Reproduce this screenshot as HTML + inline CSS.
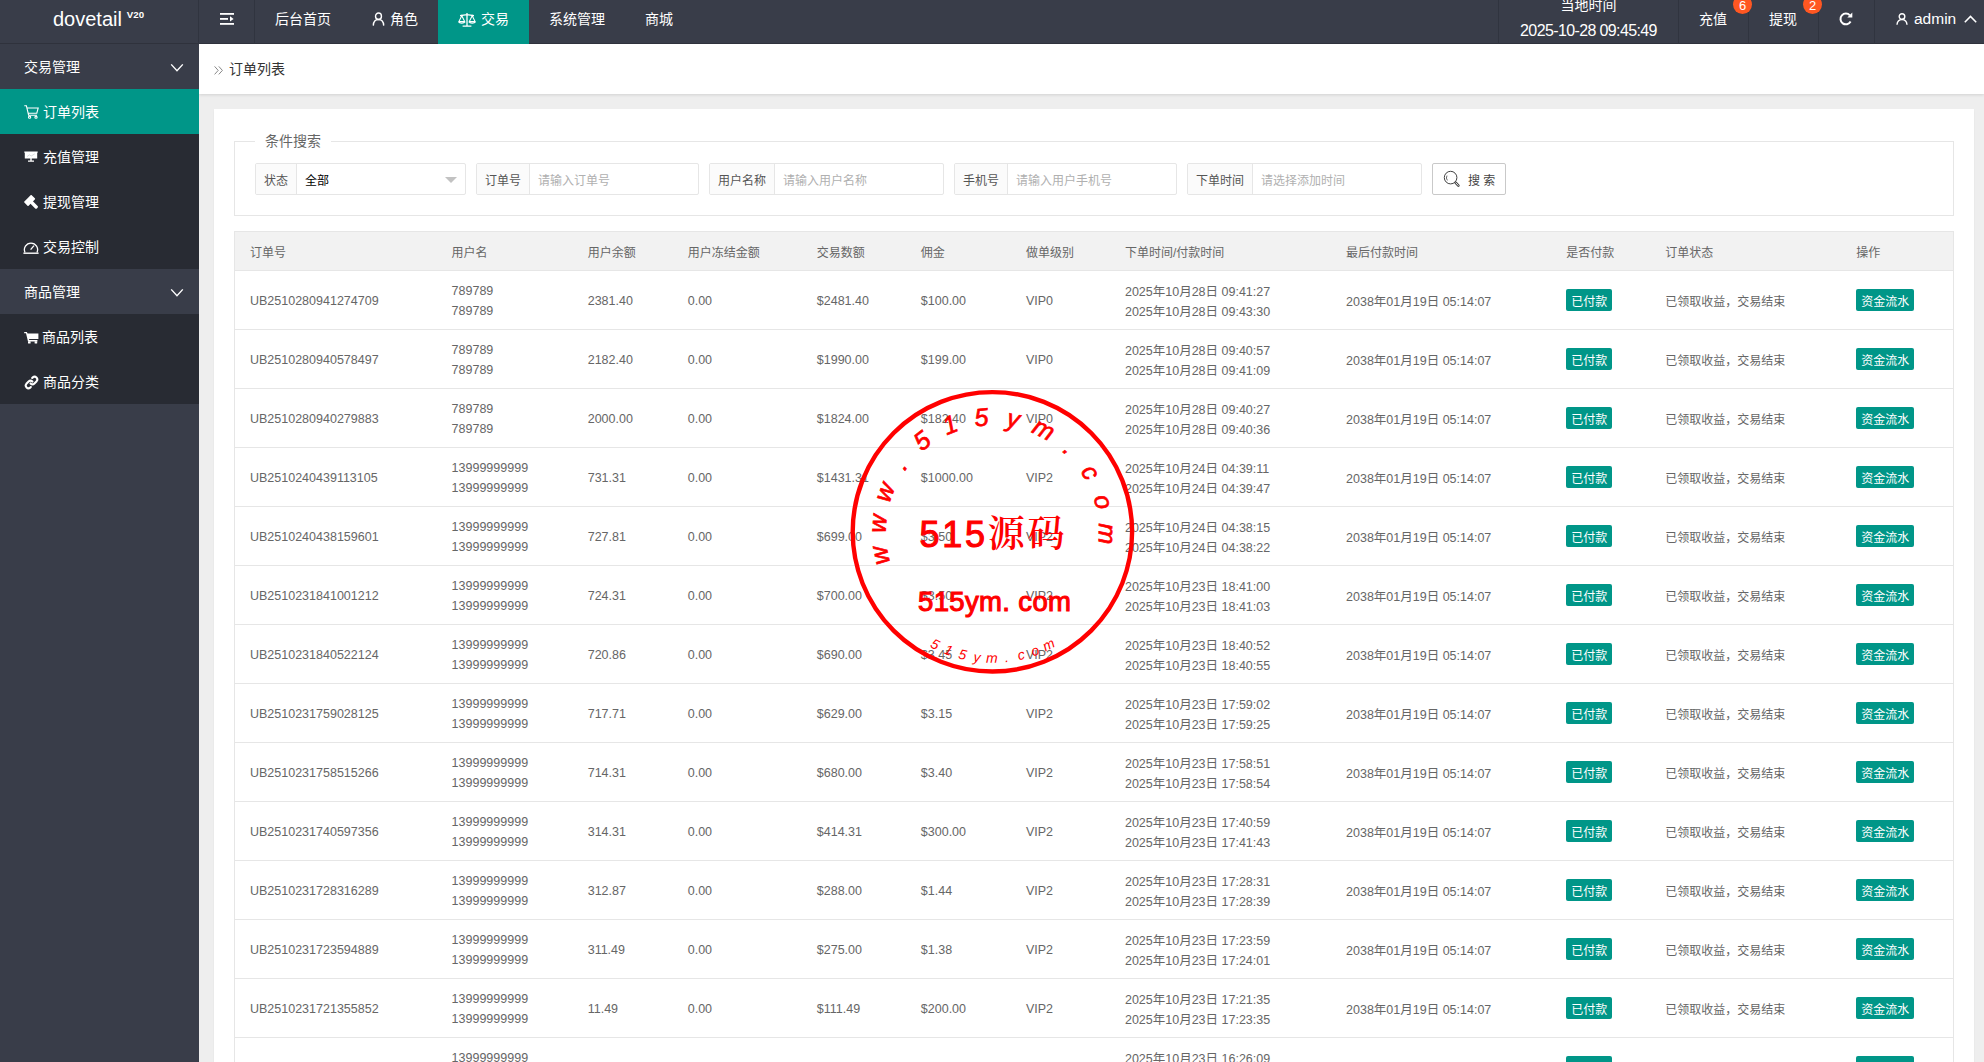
<!DOCTYPE html>
<html lang="zh-CN">
<head>
<meta charset="utf-8">
<title>订单列表</title>
<style>
*{box-sizing:border-box;margin:0;padding:0}
html,body{width:1984px;height:1062px;overflow:hidden;background:#eeeeee;
  font-family:"Liberation Sans","Noto Sans CJK SC",sans-serif;font-size:14px;color:#333}
a{color:inherit;text-decoration:none}
ul{list-style:none}
svg{display:block}

/* ---------- header ---------- */
#hd{position:absolute;left:0;top:0;width:1984px;height:44px;background:#393d49;color:#fff;z-index:5;box-shadow:inset 0 -1px 0 #2f323c}
#logo{position:absolute;left:0;top:0;width:199px;height:44px;border-right:1px solid #30343f}
#logo b{position:absolute;left:53px;top:6px;font-weight:400;font-size:20px;line-height:26px}
#logo i{position:absolute;left:126.8px;top:8.5px;font-style:normal;font-weight:700;font-size:9.7px;line-height:12px}
#nav{position:absolute;left:199px;top:0;height:44px;display:flex}
#nav li{position:relative;height:44px;line-height:39px;padding:0 20px;font-size:14px;white-space:nowrap;display:flex;align-items:flex-start}
#nav li.ham{width:56px;padding:0;border-right:1px solid #30343f}
#nav li.on{background:#009688}
#nav li svg{margin-right:6px}
#rt{position:absolute;right:0;top:0;height:44px;display:flex}
#rt li{position:relative;height:44px;line-height:39px;font-size:14px;border-left:1px solid #30343f;white-space:nowrap}
.bdg{position:absolute;z-index:3;top:-5px;width:19px;height:19px;border-radius:50%;background:#ff5722;color:#fff;font-size:13px;line-height:21px;text-align:center}

#rt li.tm{text-align:center}
#rt .t1{position:absolute;left:0;width:100%;top:-6px;line-height:22px;font-size:14px}
#rt .t2{position:absolute;left:0;width:100%;top:19.5px;line-height:22px;font-size:16px;letter-spacing:-.62px}
#rt .adm{position:absolute;left:39px;top:0;font-size:15.5px;line-height:38px}
/* ---------- sidebar ---------- */
#sd{position:absolute;left:0;top:44px;width:199px;height:1018px;background:#393d49;color:#fff;z-index:4}
#sd li{position:relative;height:45px;line-height:47px;font-size:14px;white-space:nowrap}
#sd li.g{padding-left:24px}
#sd li.c{background:#282b33;padding-left:43px}
#sd li.c.on{background:#009688}
#sd li svg{position:absolute}

/* ---------- breadcrumb ---------- */
#bc{position:absolute;left:199px;top:44px;width:1785px;height:50px;background:#fff;box-shadow:0 1px 3px rgba(0,0,0,.12);z-index:3}
#bc span{position:absolute;left:30px;top:0;line-height:51px;font-size:14px;color:#333}

/* ---------- card ---------- */
#card{position:absolute;left:214px;top:109px;width:1760px;height:960px;background:#fff;box-shadow:0 1px 2px rgba(0,0,0,.05)}
#fs{position:absolute;left:20px;top:32px;width:1720px;height:75px;border:1px solid #e6e6e6}
#fs .lg{position:absolute;left:20px;top:-12px;padding:0 10px;background:#fff;font-size:14px;line-height:22px;color:#666}
.ig{position:absolute;top:21px;height:32px;border:1px solid #e6e6e6;border-radius:2px;background:#fff;display:flex;font-size:12px;line-height:34px;overflow:hidden}
.ig .lb{background:#fbfbfb;border-right:1px solid #e6e6e6;padding:0 8px;color:#555;white-space:nowrap}
.ig .ph{padding-left:8px;color:#b0b0b0;white-space:nowrap}
.ig .vl{padding-left:8px;color:#000;white-space:nowrap}
.ig .tri{position:absolute;right:8.5px;top:12.5px;width:0;height:0;border:6px solid transparent;border-top-color:#c2c2c2;border-bottom:0}
#sbtn{position:absolute;left:1197px;top:21px;width:74px;height:32px;border:1px solid #c9c9c9;border-radius:2px;background:#fff;font-size:12px;line-height:34px;color:#444}

/* ---------- table ---------- */
#tb{position:absolute;left:20px;top:122px;width:1720px;border-collapse:collapse;table-layout:fixed;font-size:12.5px;color:#666}
#tb th,#tb td{border-top:1px solid #e6e6e6;border-bottom:1px solid #e6e6e6;padding:0 15px;text-align:left;font-weight:400;white-space:nowrap;overflow:hidden}
#tb{border:1px solid #e6e6e6}
#tb th{height:39px;background:#f2f2f2;font-size:12px;color:#666}
#tb td{height:59px;line-height:20px;padding-top:2px}
#tb td.z{font-size:12px;padding-top:4px}
#tb td.d{padding-top:4px}
.btn{display:inline-block;position:relative;top:-1px;height:22px;line-height:27px;overflow:hidden;padding:0 5px;background:#009688;color:#fff;font-size:12px;border-radius:2px;vertical-align:middle}
</style>
</head>
<body>

<div id="hd">
  <div id="logo"><b>dovetail</b><i>V20</i></div>
  <ul id="nav">
    <li class="ham"><svg width="14" height="12" viewBox="0 0 14 12" style="position:absolute;left:21px;top:13px" fill="#fff"><rect x="0" y="0" width="14" height="1.8"/><rect x="0" y="5" width="8" height="1.8"/><rect x="0" y="10" width="14" height="1.8"/><path d="M10 3.2 L13.6 5.9 L10 8.6Z"/></svg></li>
    <li>后台首页</li>
    <li><svg width="13" height="14" viewBox="0 0 14 14" preserveAspectRatio="none" style="margin-top:12px;margin-left:1px;margin-right:5px" fill="none" stroke="#fff" stroke-width="1.5"><circle cx="7" cy="4.2" r="3.2"/><path d="M1.4 13.6 C1.6 9.6 4 7.6 7 7.6 C10 7.6 12.4 9.6 12.6 13.6"/></svg>角色</li>
    <li class="on"><svg width="18" height="15" viewBox="0 0 18 15" style="margin-top:12px;margin-right:5px" fill="none" stroke="#fff" stroke-width="1.3"><path d="M9 1 V13.6 M4.6 14.2 H13.4 M2 3.6 C4.5 3.6 6.5 2.6 9 2.6 C11.5 2.6 13.5 3.6 16 3.6"/><path d="M3.8 3.8 L0.9 9.6 H6.7 Z M14.2 3.8 L11.3 9.6 H17.1 Z" stroke-width="1.1"/><path d="M0.8 9.8 C1.4 11.6 6.2 11.6 6.8 9.8 M11.2 9.8 C11.8 11.6 16.6 11.6 17.2 9.8" stroke-width="1.3"/></svg>交易</li>
    <li>系统管理</li>
    <li>商城</li>
  </ul>
  <ul id="rt">
    <li class="tm" style="width:180px"><span class="t1">当地时间</span><span class="t2">2025-10-28 09:45:49</span></li>
    <li style="width:70px;padding-left:20px">充值<span class="bdg" style="left:54px">6</span></li>
    <li style="width:70px;padding-left:20px">提现<span class="bdg" style="left:54px">2</span></li>
    <li style="width:56px"><svg width="14" height="14" viewBox="0 0 14 14" style="position:absolute;left:20px;top:12px" fill="none" stroke="#fff" stroke-width="2"><path d="M11.6 9.6 A5.4 5.4 0 1 1 10.9 3.3"/><path d="M13.3 0.6 V5.6 H8.3 Z" fill="#fff" stroke="none"/></svg></li>
    <li style="width:110px"><svg width="12" height="12" viewBox="0 0 12 12" style="position:absolute;left:21px;top:13px" fill="none" stroke="#fff" stroke-width="1.4"><circle cx="6" cy="3.5" r="2.8"/><path d="M1 11.8 C1.2 8.4 3.4 6.6 6 6.6 C8.6 6.6 10.8 8.4 11 11.8"/></svg><span class="adm">admin</span><svg width="13" height="8" viewBox="0 0 13 8" style="position:absolute;left:89px;top:15px" fill="none" stroke="#fff" stroke-width="1.5"><path d="M0.8 7.2 L6.5 1.4 L12.2 7.2"/></svg></li>
  </ul>
</div>

<ul id="sd">
  <li class="g">交易管理<svg width="14" height="10" viewBox="0 0 14 10" style="left:170px;top:19px" fill="none" stroke="#fff" stroke-width="1.4"><path d="M1.2 1.4 L7 7.8 L12.8 1.4"/></svg></li>
  <li class="c on"><svg width="15" height="14" viewBox="0 0 15 14" style="left:24px;top:16px" fill="none" stroke="#fff" stroke-width="1.1"><path d="M0.3 0.8 H2.4 L4.6 10.2 H13 M3 3 H14.2 L12.8 8.2 H4.2"/><circle cx="5.6" cy="12.2" r="1.1"/><circle cx="12" cy="12.2" r="1.1"/></svg>订单列表</li>
  <li class="c"><svg width="14" height="12" viewBox="0 0 14 12" style="left:24px;top:17px" fill="#fff"><path d="M0.3 0.4 H13.7 V1.8 H13.2 V7.6 H0.8 V1.8 H0.3 Z M6.3 7.6 H7.7 V9.6 H10 V10.8 H4 V9.6 H6.3 Z"/><path d="M3 5.6 L5.4 3.8 L7.2 5 L10.8 2.8" fill="none" stroke="#c9cbd0" stroke-width=".7"/></svg>充值管理</li>
  <li class="c"><svg width="15" height="15" viewBox="0 0 15 15" style="left:24px;top:16px" fill="#fff"><rect x="0.4" y="2.4" width="10.4" height="6" rx=".8" transform="rotate(-45 5.6 5.4)"/><rect x="6" y="3.7" width="10.4" height="3.4" rx="1.2" transform="rotate(45 5.6 5.4)"/></svg>提现管理</li>
  <li class="c"><svg width="16" height="13" viewBox="0 0 16 13" style="left:23px;top:17px" fill="none" stroke="#fff" stroke-width="1.3"><path d="M2 11.4 A6.6 6.6 0 1 1 14 11.4"/><path d="M0.4 12.2 H15.6" stroke-width="1.4"/><path d="M7.6 8.6 L11 4.6" stroke-width="1.3"/></svg>交易控制</li>
  <li class="g">商品管理<svg width="14" height="10" viewBox="0 0 14 10" style="left:170px;top:19px" fill="none" stroke="#fff" stroke-width="1.4"><path d="M1.2 1.4 L7 7.8 L12.8 1.4"/></svg></li>
  <li class="c" style="padding-left:42px"><svg width="15" height="12" viewBox="0 0 15 12" style="left:23.5px;top:18px" fill="#fff"><path d="M0.2 0 H2.8 L3.6 1.4 H14.4 V6.9 H5 L5.2 8 H13.4 V9.4 H4 L2 1.3 H0.2 Z"/><rect x="4" y="9.2" width="2.6" height="2.4" rx=".6"/><rect x="10.6" y="9.2" width="2.6" height="2.4" rx=".6"/></svg>商品列表</li>
  <li class="c"><svg width="15" height="15" viewBox="0 0 15 15" style="left:23.5px;top:15.5px" fill="none" stroke="#fff" stroke-width="2.1" stroke-linecap="round"><path d="M6.6 8.4 A2.7 2.7 0 0 0 10.4 8.4 L12.6 6.2 A2.7 2.7 0 0 0 8.8 2.4 L8.2 3"/><path d="M8.4 6.6 A2.7 2.7 0 0 0 4.6 6.6 L2.4 8.8 A2.7 2.7 0 0 0 6.2 12.6 L6.8 12"/></svg>商品分类</li>
</ul>

<div id="bc"><svg width="9" height="9" viewBox="0 0 9 9" style="position:absolute;left:15px;top:22px" fill="none" stroke="#888" stroke-width="1"><path d="M0.6 0.4 L4.2 4.4 L0.6 8.4 M4.8 0.4 L8.4 4.4 L4.8 8.4"/></svg><span>订单列表</span></div>

<div id="card">
  <div id="fs">
    <div class="lg">条件搜索</div>
    <div class="ig" style="left:20px;width:211px"><span class="lb">状态</span><span class="vl">全部</span><i class="tri"></i></div>
    <div class="ig" style="left:241px;width:223px"><span class="lb">订单号</span><span class="ph">请输入订单号</span></div>
    <div class="ig" style="left:474px;width:235px"><span class="lb">用户名称</span><span class="ph">请输入用户名称</span></div>
    <div class="ig" style="left:719px;width:223px"><span class="lb">手机号</span><span class="ph">请输入用户手机号</span></div>
    <div class="ig" style="left:952px;width:235px"><span class="lb">下单时间</span><span class="ph">请选择添加时间</span></div>
    <div id="sbtn"><svg width="18" height="18" viewBox="0 0 18 18" style="position:absolute;left:10.4px;top:6px" fill="none" stroke="#444" stroke-width="1"><circle cx="7.6" cy="7.6" r="6.3"/><path d="M4 5.6 A4.2 4.2 0 0 0 4.4 10.4" stroke-width=".8"/><path d="M12.6 12.6 L15.4 15.6" stroke-width="2.6" stroke-linecap="round"/><path d="M12.8 12.8 L15.2 15.4" stroke="#fff" stroke-width=".9" stroke-linecap="round"/></svg><span style="position:absolute;left:35px;top:0">搜 索</span></div>
  </div>
  <table id="tb">
    <colgroup><col style="width:202px"><col style="width:136px"><col style="width:100px"><col style="width:129px"><col style="width:104px"><col style="width:105px"><col style="width:99px"><col style="width:221px"><col style="width:220px"><col style="width:99px"><col style="width:191px"><col style="width:112px"></colgroup>
    <thead><tr><th>订单号</th><th>用户名</th><th>用户余额</th><th>用户冻结金额</th><th>交易数额</th><th>佣金</th><th>做单级别</th><th>下单时间/付款时间</th><th>最后付款时间</th><th>是否付款</th><th>订单状态</th><th>操作</th></tr></thead>
    <tbody id="rows">
      <tr><td>UB2510280941274709</td><td>789789<br>789789</td><td>2381.40</td><td>0.00</td><td>$2481.40</td><td>$100.00</td><td>VIP0</td><td class="d">2025年10月28日 09:41:27<br>2025年10月28日 09:43:30</td><td class="d">2038年01月19日 05:14:07</td><td><span class="btn">已付款</span></td><td class="z">已领取收益，交易结束</td><td><span class="btn">资金流水</span></td></tr>
      <tr><td>UB2510280940578497</td><td>789789<br>789789</td><td>2182.40</td><td>0.00</td><td>$1990.00</td><td>$199.00</td><td>VIP0</td><td class="d">2025年10月28日 09:40:57<br>2025年10月28日 09:41:09</td><td class="d">2038年01月19日 05:14:07</td><td><span class="btn">已付款</span></td><td class="z">已领取收益，交易结束</td><td><span class="btn">资金流水</span></td></tr>
      <tr><td>UB2510280940279883</td><td>789789<br>789789</td><td>2000.00</td><td>0.00</td><td>$1824.00</td><td>$182.40</td><td>VIP0</td><td class="d">2025年10月28日 09:40:27<br>2025年10月28日 09:40:36</td><td class="d">2038年01月19日 05:14:07</td><td><span class="btn">已付款</span></td><td class="z">已领取收益，交易结束</td><td><span class="btn">资金流水</span></td></tr>
      <tr><td>UB2510240439113105</td><td>13999999999<br>13999999999</td><td>731.31</td><td>0.00</td><td>$1431.31</td><td>$1000.00</td><td>VIP2</td><td class="d">2025年10月24日 04:39:11<br>2025年10月24日 04:39:47</td><td class="d">2038年01月19日 05:14:07</td><td><span class="btn">已付款</span></td><td class="z">已领取收益，交易结束</td><td><span class="btn">资金流水</span></td></tr>
      <tr><td>UB2510240438159601</td><td>13999999999<br>13999999999</td><td>727.81</td><td>0.00</td><td>$699.00</td><td>$3.50</td><td>VIP2</td><td class="d">2025年10月24日 04:38:15<br>2025年10月24日 04:38:22</td><td class="d">2038年01月19日 05:14:07</td><td><span class="btn">已付款</span></td><td class="z">已领取收益，交易结束</td><td><span class="btn">资金流水</span></td></tr>
      <tr><td>UB2510231841001212</td><td>13999999999<br>13999999999</td><td>724.31</td><td>0.00</td><td>$700.00</td><td>$3.50</td><td>VIP2</td><td class="d">2025年10月23日 18:41:00<br>2025年10月23日 18:41:03</td><td class="d">2038年01月19日 05:14:07</td><td><span class="btn">已付款</span></td><td class="z">已领取收益，交易结束</td><td><span class="btn">资金流水</span></td></tr>
      <tr><td>UB2510231840522124</td><td>13999999999<br>13999999999</td><td>720.86</td><td>0.00</td><td>$690.00</td><td>$3.45</td><td>VIP2</td><td class="d">2025年10月23日 18:40:52<br>2025年10月23日 18:40:55</td><td class="d">2038年01月19日 05:14:07</td><td><span class="btn">已付款</span></td><td class="z">已领取收益，交易结束</td><td><span class="btn">资金流水</span></td></tr>
      <tr><td>UB2510231759028125</td><td>13999999999<br>13999999999</td><td>717.71</td><td>0.00</td><td>$629.00</td><td>$3.15</td><td>VIP2</td><td class="d">2025年10月23日 17:59:02<br>2025年10月23日 17:59:25</td><td class="d">2038年01月19日 05:14:07</td><td><span class="btn">已付款</span></td><td class="z">已领取收益，交易结束</td><td><span class="btn">资金流水</span></td></tr>
      <tr><td>UB2510231758515266</td><td>13999999999<br>13999999999</td><td>714.31</td><td>0.00</td><td>$680.00</td><td>$3.40</td><td>VIP2</td><td class="d">2025年10月23日 17:58:51<br>2025年10月23日 17:58:54</td><td class="d">2038年01月19日 05:14:07</td><td><span class="btn">已付款</span></td><td class="z">已领取收益，交易结束</td><td><span class="btn">资金流水</span></td></tr>
      <tr><td>UB2510231740597356</td><td>13999999999<br>13999999999</td><td>314.31</td><td>0.00</td><td>$414.31</td><td>$300.00</td><td>VIP2</td><td class="d">2025年10月23日 17:40:59<br>2025年10月23日 17:41:43</td><td class="d">2038年01月19日 05:14:07</td><td><span class="btn">已付款</span></td><td class="z">已领取收益，交易结束</td><td><span class="btn">资金流水</span></td></tr>
      <tr><td>UB2510231728316289</td><td>13999999999<br>13999999999</td><td>312.87</td><td>0.00</td><td>$288.00</td><td>$1.44</td><td>VIP2</td><td class="d">2025年10月23日 17:28:31<br>2025年10月23日 17:28:39</td><td class="d">2038年01月19日 05:14:07</td><td><span class="btn">已付款</span></td><td class="z">已领取收益，交易结束</td><td><span class="btn">资金流水</span></td></tr>
      <tr><td>UB2510231723594889</td><td>13999999999<br>13999999999</td><td>311.49</td><td>0.00</td><td>$275.00</td><td>$1.38</td><td>VIP2</td><td class="d">2025年10月23日 17:23:59<br>2025年10月23日 17:24:01</td><td class="d">2038年01月19日 05:14:07</td><td><span class="btn">已付款</span></td><td class="z">已领取收益，交易结束</td><td><span class="btn">资金流水</span></td></tr>
      <tr><td>UB2510231721355852</td><td>13999999999<br>13999999999</td><td>11.49</td><td>0.00</td><td>$111.49</td><td>$200.00</td><td>VIP2</td><td class="d">2025年10月23日 17:21:35<br>2025年10月23日 17:23:35</td><td class="d">2038年01月19日 05:14:07</td><td><span class="btn">已付款</span></td><td class="z">已领取收益，交易结束</td><td><span class="btn">资金流水</span></td></tr>
      <tr><td>UB2510231626090331</td><td>13999999999<br>13999999999</td><td>211.49</td><td>0.00</td><td>$200.00</td><td>$1.00</td><td>VIP2</td><td class="d">2025年10月23日 16:26:09<br>2025年10月23日 16:26:15</td><td class="d">2038年01月19日 05:14:07</td><td><span class="btn">已付款</span></td><td class="z">已领取收益，交易结束</td><td><span class="btn">资金流水</span></td></tr>
    </tbody>
  </table>
</div>

<!--STAMP-->
<svg id="stamp" width="300" height="302" viewBox="0 0 300 302" style="position:absolute;left:842px;top:381px;z-index:9" fill="#f00" font-family="'Liberation Sans','Noto Serif CJK SC',sans-serif">
  <circle cx="150.4" cy="150.8" r="139.7" fill="none" stroke="#f00" stroke-width="4.4"/>
  <text x="48.1 43.5 47.3 62.4 79.8 104.7 133.2 163.8 188.8 220.1 238.3 251.4 257.1" y="181.8 152.2 122.6 90.6 70.8 54.3 45.5 45.0 50.9 70.2 90.3 116.3 142.2" rotate="-102.0 -85.9 -69.8 -53.8 -37.7 -21.6 -5.5 10.6 26.6 42.7 58.8 74.9 91.0" font-size="25" font-style="italic" font-weight="400" stroke="#f00" stroke-width=".7">www.515ym.com</text>
  <text x="77.5" y="165.5" font-size="36" font-weight="400" stroke="#f00" stroke-width="1.1" textLength="145" lengthAdjust="spacing">515<tspan font-family="'Noto Serif CJK SC',serif" font-size="37" font-weight="600" stroke-width="0">源码</tspan></text>
  <text x="76.0" y="230.0" font-size="27.5" font-weight="400" stroke="#f00" stroke-width="1.1" textLength="153" lengthAdjust="spacing">515ym. com</text>
  <text x="87.5 101.3 115.8 131.1 144.0 163.2 176.7 191.1 203.6" y="265.8 272.3 277.2 280.4 281.8 281.2 279.2 275.4 270.6" rotate="27.0 20.3 13.6 6.9 0.2 -6.4 -13.1 -19.8 -26.5" font-size="14" font-style="italic">515ym.com</text>
</svg>
<!--/STAMP-->
</body>
</html>
